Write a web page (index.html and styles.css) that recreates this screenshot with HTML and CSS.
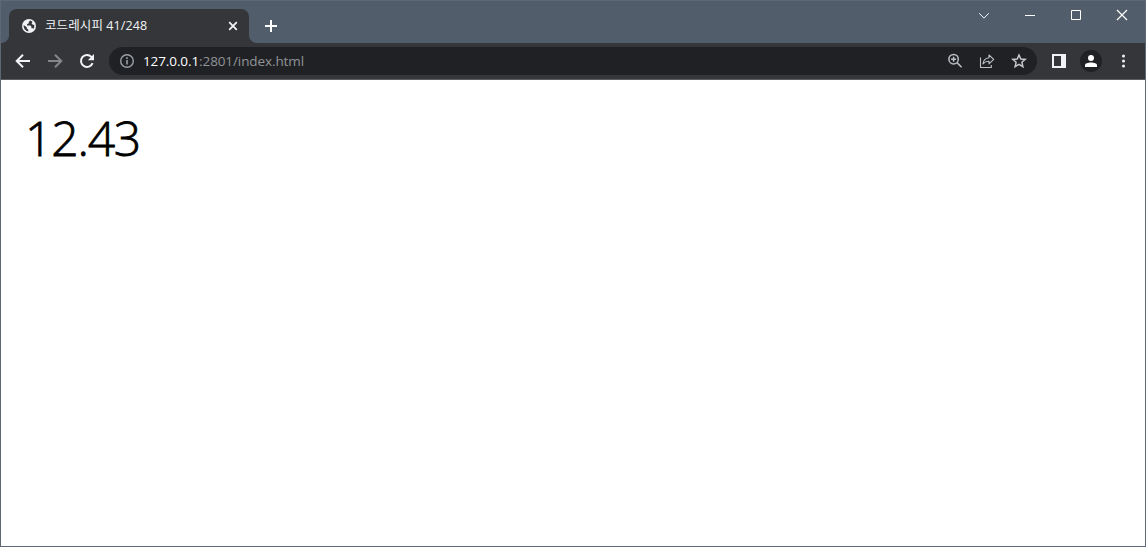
FILE: index.html
```html
<!DOCTYPE html>
<html lang="ko">
<head>
  <meta charset="UTF-8">
  <title>코드레시피 41/248</title>
  <link rel="stylesheet" href="styles.css">
</head>
<body>
  <div class="window">
    <!-- Tab strip -->
    <div class="tabs">
      <div class="tab">
        <svg class="globe" width="14" height="14" viewBox="0 0 14 14">
          <circle cx="7" cy="7" r="7" fill="#f1f3f4"/>
          <path d="M8 1.6 6.8 3v1.3L5 5.2v1.4h3.4l1 1.2v1.4h1.5l.5.8A5.4 5.4 0 0 0 12.3 6L10.4 5.6 9.6 4.2l.9-1.4A5.6 5.6 0 0 0 8 1.6ZM1.6 6.1a5.5 5.5 0 0 0 4.7 6.3v-1.7L4.8 9.6V8.3Z" fill="#35363a"/>
        </svg>
        <span class="tab-title">코드레시피 41/248</span>
        <svg class="tab-close" width="10" height="10" viewBox="0 0 10 10"><path d="m1.2 1.2 7.6 7.6m0-7.6L1.2 8.8" stroke="#f1f3f4" stroke-width="1.8"/></svg>
      </div>
      <svg class="new-tab" width="12" height="12" viewBox="0 0 12 12"><path d="M6 0v12M0 6h12" stroke="#fff" stroke-width="2"/></svg>
      <div class="controls">
        <svg width="46" height="30" viewBox="0 0 46 30"><path d="m18.2 12.2 4.8 5 4.8-5" fill="none" stroke="#f6f7f8"/></svg>
        <svg width="46" height="30" viewBox="0 0 46 30"><path d="M18 14.5h10" stroke="#fff"/></svg>
        <svg width="46" height="30" viewBox="0 0 46 30"><path d="M18.5 9.5h9v9h-9z" fill="none" stroke="#fff"/></svg>
        <svg width="46" height="30" viewBox="0 0 46 30"><path d="m18 9 10 10m0-10L18 19" stroke="#fff" stroke-width="1.2"/></svg>
      </div>
    </div>

    <!-- Toolbar -->
    <div class="toolbar">
      <svg class="nav" width="16" height="16" viewBox="0 0 16 16"><path d="M15 8H2.5M8 1.7 1.7 8 8 14.3" fill="none" stroke="#f1f3f4" stroke-width="2"/></svg>
      <svg class="nav" width="16" height="16" viewBox="0 0 16 16"><path d="M1 8h12.5M8 1.7 14.3 8 8 14.3" fill="none" stroke="#85868a" stroke-width="2"/></svg>
      <svg class="nav" width="16" height="16" viewBox="0 0 16 16"><path d="M13.6 10.1A6 6 0 1 1 12.4 3.9L14 5.5" fill="none" stroke="#f1f3f4" stroke-width="2"/><path d="M15 1v6.2H8.8Z" fill="#f1f3f4"/></svg>
      <div class="address">
        <svg width="16" height="16" viewBox="0 0 16 16"><circle cx="8" cy="8" r="6.3" fill="none" stroke="#9aa0a6" stroke-width="1.4"/><path d="M8 7v4.5M8 4.3V6" stroke="#9aa0a6" stroke-width="1.6"/></svg>
        <span class="url"><span class="host">127.0.0.1</span>:2801/index.html</span>
        <div class="actions">
          <svg width="16" height="16" viewBox="0 0 16 16"><circle cx="6.6" cy="6.2" r="4.7" fill="none" stroke="#bdc1c6" stroke-width="1.5"/><path d="m10 9.6 4.6 4.6M4.1 6.2h5M6.6 3.7v5" fill="none" stroke="#bdc1c6" stroke-width="1.5"/></svg>
          <svg width="16" height="16" viewBox="0 0 16 16"><path d="M1.5 4.5v10h10.8V12M10 2l4.7 4.4L10 10.8V8.2C7.3 8.1 5.4 9 4 10.8c.4-3.5 2.5-5.7 6-6.1Z" fill="none" stroke="#bdc1c6" stroke-width="1.1" stroke-linejoin="round"/></svg>
          <svg width="16" height="16" viewBox="0 0 16 16"><path d="m8 2 1.8 4 4.4.4-3.3 2.9 1 4.3L8 11.3l-3.9 2.3 1-4.3-3.3-2.9L6.2 6Z" fill="none" stroke="#c5c8cc" stroke-width="1.5"/></svg>
        </div>
      </div>
      <svg class="panel" width="14" height="14" viewBox="0 0 14 14"><path d="M0 0h14v14H0Zm2 2v10h7V2Z" fill="#f1f3f4" fill-rule="evenodd"/></svg>
      <div class="profile">
        <svg width="12" height="12" viewBox="0 0 12 12"><circle cx="6" cy="3" r="3" fill="#fff"/><path d="M0 12v-1.8C0 8.4 3 7.5 6 7.5s6 .9 6 2.7V12Z" fill="#fff"/></svg>
      </div>
      <svg class="menu" width="4" height="14" viewBox="0 0 4 14"><g fill="#f1f3f4"><circle cx="2.5" cy="2" r="1.5"/><circle cx="2.5" cy="7" r="1.5"/><circle cx="2.5" cy="12" r="1.5"/></g></svg>
    </div>

    <!-- Page -->
    <div class="page">12.43</div>
  </div>
</body>
</html>
```
FILE: styles.css
```css
body {
  margin: 0;
  font-family: "Open Sans", "Noto Sans CJK KR", sans-serif;
}

.window {
  box-sizing: border-box;
  height: 547px;
  border: 1px solid #5d6975;
  background: #fff;
  overflow: hidden;
}

.tabs {
  display: flex;
  height: 42px;
  background: #515d6a;
}

.tab {
  position: relative;
  display: flex;
  align-items: center;
  box-sizing: border-box;
  width: 240px;
  height: 34px;
  margin: 8px 0 0 8px;
  padding: 0 11px 0 13px;
  border-radius: 8px 8px 0 0;
  background: #35363a;
}

/* rounded feet of the tab */
.tab::before,
.tab::after {
  content: "";
  position: absolute;
  bottom: 0;
  width: 8px;
  height: 8px;
}

.tab::before {
  left: -8px;
  background: radial-gradient(circle at 0 0, #515d6a 7.5px, #35363a 8.5px);
}

.tab::after {
  right: -8px;
  background: radial-gradient(circle at 100% 0, #515d6a 7.5px, #35363a 8.5px);
}

.tab-title {
  flex: 1;
  margin-left: 9px;
  font-size: 12.5px;
  line-height: 18px;
  letter-spacing: 0.1px;
  white-space: nowrap;
  color: #f1f3f4;
}

.new-tab {
  margin: 19px 0 0 16px;
}

.controls {
  display: flex;
  margin-left: auto;
}

.toolbar {
  display: flex;
  align-items: center;
  box-sizing: border-box;
  height: 37px;
  padding: 0 20px 0 14px;
  border-bottom: 1px solid #5b5c60;
  background: #35363a;
}

.nav {
  margin-right: 16px;
}

.address {
  display: flex;
  flex: 1;
  align-items: center;
  height: 28px;
  margin-left: -2px;
  padding: 0 10px;
  border-radius: 14px;
  background: #202124;
}

.url {
  margin-left: 8px;
  font-size: 13.5px;
  line-height: 20px;
  letter-spacing: -0.1px;
  color: #909498;
}

.host {
  color: #fff;
}

.actions {
  display: flex;
  gap: 16px;
  margin-left: auto;
}

.panel {
  margin-left: 15px;
}

.profile {
  display: flex;
  align-items: center;
  justify-content: center;
  width: 22px;
  height: 22px;
  margin-left: 14px;
  border-radius: 50%;
  background: #202124;
}

.menu {
  margin-left: 19px;
}

.page {
  padding: 23px 24px;
  font-size: 48px;
  line-height: 70px;
  letter-spacing: -1.2px;
  font-weight: 300;
  -webkit-text-stroke: 0.8px #000;
}
```
